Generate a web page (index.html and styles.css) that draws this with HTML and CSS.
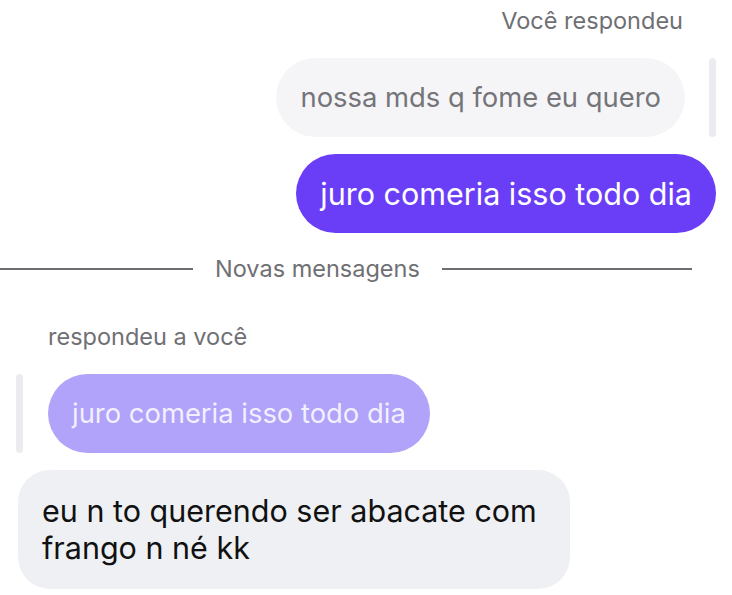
FILE: index.html
```html
<!DOCTYPE html>
<html lang="pt-BR">
<head>
    <meta charset="UTF-8">
    <meta name="viewport" content="width=device-width, initial-scale=1.0">
    <title>Conversa</title>
    <link rel="stylesheet" href="styles.css">
</head>
<body>
<div class="thread">
    <div class="group outgoing">
        <div class="reply-label">Você respondeu</div>
        <div class="quote-row">
            <div class="quote">nossa mds q fome eu quero</div>
            <span class="quote-bar"></span>
        </div>
        <div class="bubble mine">juro comeria isso todo dia</div>
    </div>

    <div class="divider">
        <span class="line line-left"></span>
        <span class="divider-text">Novas mensagens</span>
        <span class="line"></span>
    </div>

    <div class="group incoming">
        <div class="reply-label">respondeu a você</div>
        <div class="quote-row">
            <span class="quote-bar"></span>
            <div class="quote quote-mine">juro comeria isso todo dia</div>
        </div>
        <div class="bubble theirs">eu n to querendo ser abacate com frango n né kk</div>
    </div>
</div>
</body>
</html>
```

FILE: styles.css
```css
body {
    margin: 0;
    background-color: #ffffff;
    font-family: Inter, "Noto Sans", sans-serif;
}

.thread {
    display: flex;
    flex-direction: column;
    padding-top: 9px;
}

.group {
    display: flex;
    flex-direction: column;
}

.outgoing {
    align-items: flex-end;
    padding-right: 16px;
}

.incoming {
    align-items: flex-start;
    padding-left: 16px;
    margin-top: 44px;
}

.reply-label {
    font-size: 23.5px;
    line-height: 24px;
    color: #6f6f74;
    margin-bottom: 25px;
}

.outgoing .reply-label {
    margin-right: 33px;
}

.incoming .reply-label {
    margin-left: 32px;
}

.quote-row {
    display: flex;
    align-items: stretch;
    gap: 24px;
}

.incoming .quote-row {
    gap: 25px;
}

.quote-bar {
    width: 7px;
    border-radius: 4px;
    background-color: #ececf0;
}

.quote {
    font-size: 27.4px;
    line-height: 35px;
    padding: 22px 24px;
    border-radius: 40px;
    background-color: #f5f5f7;
    color: #747479;
}

.quote-mine {
    background-color: #b1a3f9;
    color: rgba(255, 255, 255, 0.85);
}

.bubble {
    font-size: 30.5px;
    line-height: 35px;
    padding: 22px 24px;
    border-radius: 40px;
    margin-top: 17px;
}

.mine {
    background-color: #6a3ef7;
    color: #ffffff;
}

.theirs {
    background-color: #eef0f3;
    color: #111111;
    line-height: 37px;
    width: 504px;
    padding: 22px 24px 23px;
    border-radius: 32px;
    margin-left: 2px;
}

.divider {
    display: flex;
    align-items: center;
    gap: 22px;
    padding-right: 40px;
    margin-top: 24px;
}

.line {
    flex: 1;
    height: 2px;
    background-color: #6e6e72;
}

.line-left {
    flex: 0 0 193px;
}

.divider-text {
    font-size: 23.5px;
    line-height: 24px;
    color: #6f6f74;
}
```
